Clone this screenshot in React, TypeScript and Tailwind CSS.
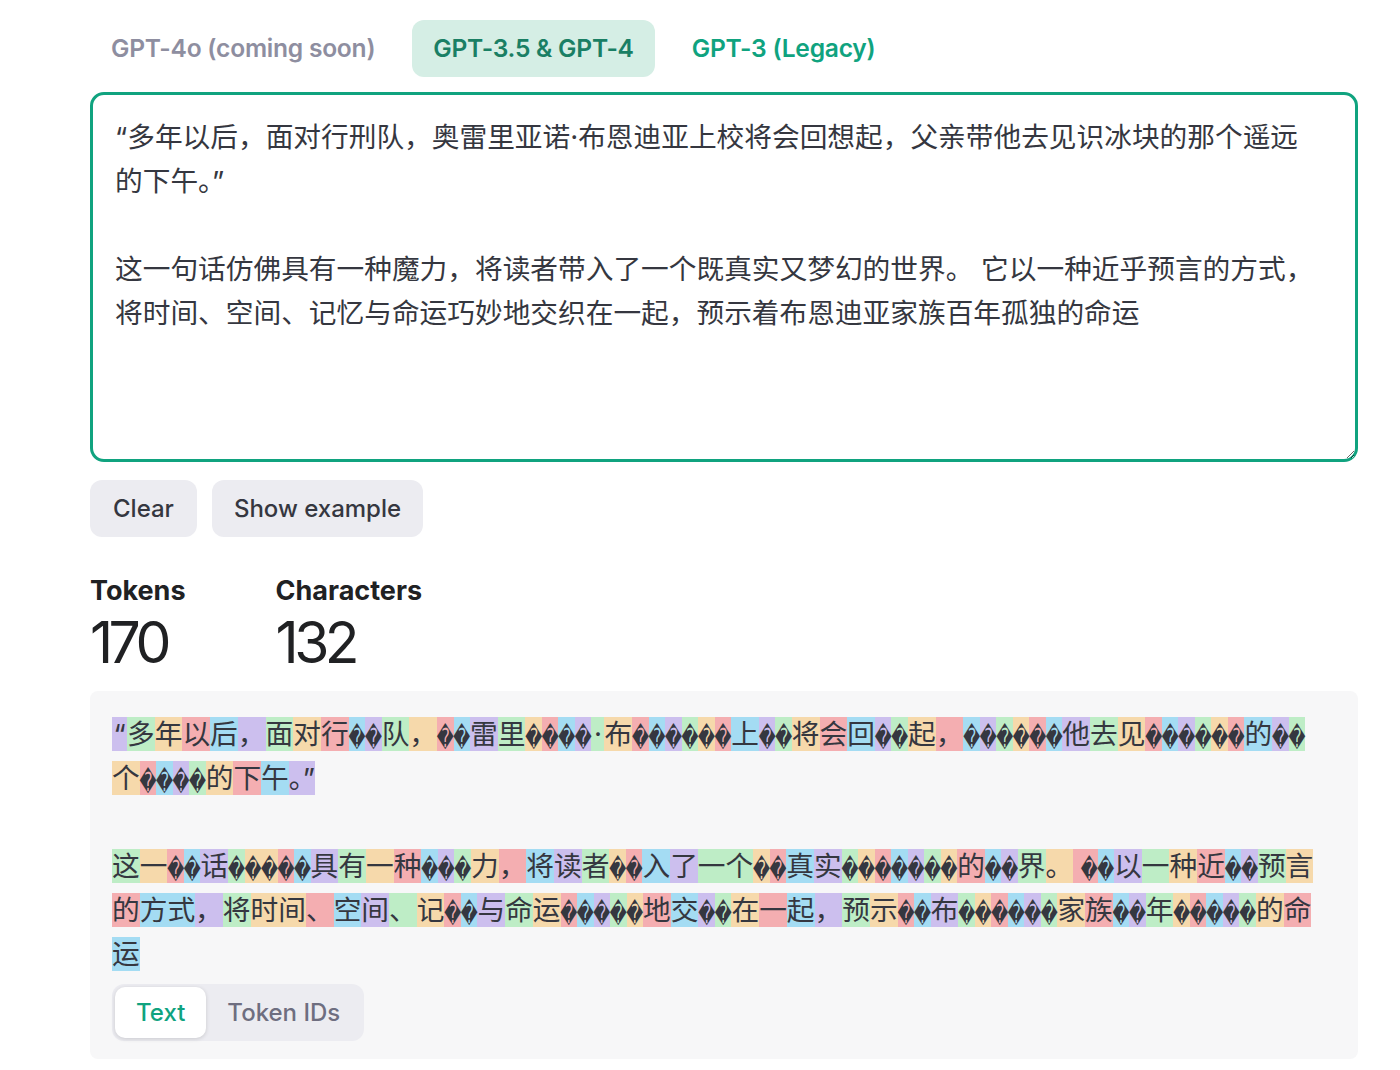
import { useState } from 'react';

const TEXT =
  '“多年以后，面对行刑队，奥雷里亚诺·布恩迪亚上校将会回想起，父亲带他去见识冰块的那个遥远的下午。”\n\n这一句话仿佛具有一种魔力，将读者带入了一个既真实又梦幻的世界。 它以一种近乎预言的方式，将时间、空间、记忆与命运巧妙地交织在一起，预示着布恩迪亚家族百年孤独的命运';

// tokens per visual line, "_" stands for a space
const LINES: (string | null)[] = [
  '“ 多 年 以 后 ， 面 对 行 � � 队 ， � � 雷 里 � � � � · 布 � � � � � � 上 � � 将 会 回 � � 起 ， � � � � � � 他 去 见 � � � � � � 的 � �',
  '个 � � � � 的 下 午 。”',
  null,
  '这 一 � � 话 � �� � � 具 有 一 种 � � � 力 ， 将 读 者 � � 入 了 一个 � � 真 实 � � � � � � � 的 � � 界 。 _� � 以 一 种 近 � � 预 言',
  '的 方式 ， 将 时间 、 空 间 、 记 � � 与 命 运 � � � � � 地 交 � � 在 一 起 ， 预 示 � � 布 � � � � � � 家 族 � � 年 � � � � � 的 命',
  '运',
];

const COLORS = [
  'bg-[rgba(107,64,216,0.3)]',
  'bg-[rgba(104,222,122,0.4)]',
  'bg-[rgba(244,172,54,0.4)]',
  'bg-[rgba(239,65,70,0.4)]',
  'bg-[rgba(39,181,234,0.4)]',
];

const FONT = "font-['Inter','Noto_Sans_CJK_SC',sans-serif]";

function Char({ c }: { c: string }) {
  if (c === '�')
    return (
      <span className="inline-flex w-[16.5px] justify-center">
        <span className="inline-block font-['DejaVu_Sans'] text-[16.5px] scale-y-[1.6]">{c}</span>
      </span>
    );
  if (c === '“') return <span className="inline-block w-[15px] text-center">{c}</span>;
  if (c === '·') return <span className="inline-block w-[13px] text-center">{c}</span>;
  return <span>{c}</span>;
}

function Token({ text, idx }: { text: string; idx: number }) {
  const chars = Array.from(text.replace(/_/g, ' '));
  return (
    <span className={COLORS[idx % 5]}>
      {chars.map((c, i) => (
        <Char key={i} c={c} />
      ))}
    </span>
  );
}

function TokenView() {
  let n = 0;
  return (
    <div className="text-[27.7px] leading-[44px] text-[#353740]">
      {LINES.map((line, li) => {
        if (line === null) return <div key={li} className="h-[44px]" />;
        const toks = line.split(' ');
        return (
          <div key={li} className="h-[44px] whitespace-pre">
            {toks.map((t) => {
              const i = n++;
              return <Token key={i} text={t} idx={i} />;
            })}
          </div>
        );
      })}
    </div>
  );
}

export default function App() {
  const [tab, setTab] = useState(1);
  const [view, setView] = useState<'text' | 'ids'>('text');
  const tabs = ['GPT-4o (coming soon)', 'GPT-3.5 & GPT-4', 'GPT-3 (Legacy)'];

  return (
    <div className={`${FONT} min-h-screen bg-white pt-[20px] pl-[90px]`}>
      <div className="w-[1268px]">
        <div className="flex gap-4">
          {tabs.map((t, i) => (
            <button
              key={t}
              onClick={() => i > 0 && setTab(i)}
              className={`h-[57px] px-[21px] rounded-[12px] text-[24.6px] font-semibold tracking-[-0.01em]
                ${i === 0 ? 'text-[#8e8ea0]' : ''}
                ${i > 0 && tab === i ? 'bg-[#d5eee5] text-[#1a7f64]' : ''}
                ${i > 0 && tab !== i ? 'text-[#10a37f]' : ''}`}
            >
              {t}
            </button>
          ))}
        </div>

        <textarea
          defaultValue={TEXT}
          className="mt-[15px] block w-full h-[370px] border-[3px] border-[#10a37f] rounded-[14px] pl-[22px] pr-[37px] pt-[20px] text-[27.7px] leading-[44px] text-[#353740] outline-none resize-y"
        />

        <div className="mt-[18px] flex gap-[15px]">
          <button className="h-[57px] px-[23px] rounded-[12px] bg-[#ececf1] text-[24px] font-medium text-[#353740]">
            Clear
          </button>
          <button className="h-[57px] px-[22px] rounded-[12px] bg-[#ececf1] text-[24px] font-medium text-[#353740]">
            Show example
          </button>
        </div>

        <div className="mt-[38px] flex gap-[90px] text-[#202123]">
          <div>
            <div className="text-[27px] leading-[32px] font-bold">Tokens</div>
            <div className="mt-[6px] text-[57px] leading-[60px] tracking-[-0.08em]">170</div>
          </div>
          <div>
            <div className="text-[27px] leading-[32px] font-bold">Characters</div>
            <div className="mt-[6px] text-[57px] leading-[60px] tracking-[-0.08em]">132</div>
          </div>
        </div>

        <div className="mt-[18px] rounded-[8px] bg-[#f7f7f8] px-[22px] pt-[21px] pb-[18px]">
          <TokenView />
          <div className="mt-[8px] inline-flex rounded-[12px] bg-[#ececf1] p-[3px]">
            <button
              onClick={() => setView('text')}
              className={`h-[51px] px-[21px] rounded-[10px] text-[24px] font-medium ${
                view === 'text' ? 'bg-white text-[#10a37f] shadow-[0_1px_4px_rgba(0,0,0,0.15)]' : 'text-[#6e6e80]'
              }`}
            >
              Text
            </button>
            <button
              onClick={() => setView('ids')}
              className={`h-[51px] px-[21px] rounded-[10px] text-[24px] font-medium ${
                view === 'ids' ? 'bg-white text-[#10a37f] shadow-[0_1px_4px_rgba(0,0,0,0.15)]' : 'text-[#6e6e80]'
              }`}
            >
              Token IDs
            </button>
          </div>
        </div>
      </div>
    </div>
  );
}
